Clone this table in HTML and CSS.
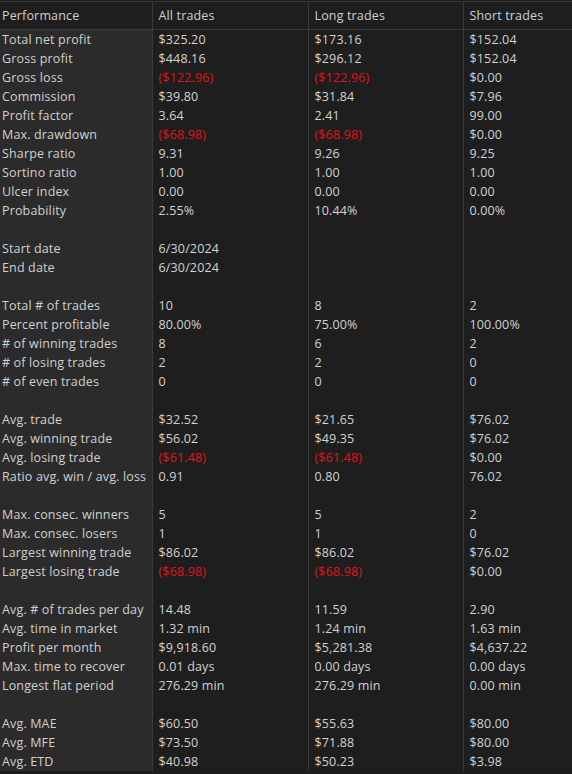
FILE: index.html
```html
<!DOCTYPE html>
<html>
<head>
<meta charset="utf-8">
<link rel="stylesheet" href="styles.css">
</head>
<body>
<table class="perf">
<colgroup><col class="c1"><col class="c2"><col class="c3"><col class="c4"></colgroup>
<thead>
<tr><th>Performance</th><th>All trades</th><th>Long trades</th><th>Short trades</th></tr>
</thead>
<tbody>
<tr><td>Total net profit</td><td>$325.20</td><td>$173.16</td><td>$152.04</td></tr>
<tr><td>Gross profit</td><td>$448.16</td><td>$296.12</td><td>$152.04</td></tr>
<tr><td>Gross loss</td><td class="neg">($122.96)</td><td class="neg">($122.96)</td><td>$0.00</td></tr>
<tr><td>Commission</td><td>$39.80</td><td>$31.84</td><td>$7.96</td></tr>
<tr><td>Profit factor</td><td>3.64</td><td>2.41</td><td>99.00</td></tr>
<tr><td>Max. drawdown</td><td class="neg">($68.98)</td><td class="neg">($68.98)</td><td>$0.00</td></tr>
<tr><td>Sharpe ratio</td><td>9.31</td><td>9.26</td><td>9.25</td></tr>
<tr><td>Sortino ratio</td><td>1.00</td><td>1.00</td><td>1.00</td></tr>
<tr><td>Ulcer index</td><td>0.00</td><td>0.00</td><td>0.00</td></tr>
<tr><td>Probability</td><td>2.55%</td><td>10.44%</td><td>0.00%</td></tr>
<tr><td></td><td></td><td></td><td></td></tr>
<tr><td>Start date</td><td>6/30/2024</td><td></td><td></td></tr>
<tr><td>End date</td><td>6/30/2024</td><td></td><td></td></tr>
<tr><td></td><td></td><td></td><td></td></tr>
<tr><td>Total # of trades</td><td>10</td><td>8</td><td>2</td></tr>
<tr><td>Percent profitable</td><td>80.00%</td><td>75.00%</td><td>100.00%</td></tr>
<tr><td># of winning trades</td><td>8</td><td>6</td><td>2</td></tr>
<tr><td># of losing trades</td><td>2</td><td>2</td><td>0</td></tr>
<tr><td># of even trades</td><td>0</td><td>0</td><td>0</td></tr>
<tr><td></td><td></td><td></td><td></td></tr>
<tr><td>Avg. trade</td><td>$32.52</td><td>$21.65</td><td>$76.02</td></tr>
<tr><td>Avg. winning trade</td><td>$56.02</td><td>$49.35</td><td>$76.02</td></tr>
<tr><td>Avg. losing trade</td><td class="neg">($61.48)</td><td class="neg">($61.48)</td><td>$0.00</td></tr>
<tr><td>Ratio avg. win / avg. loss</td><td>0.91</td><td>0.80</td><td>76.02</td></tr>
<tr><td></td><td></td><td></td><td></td></tr>
<tr><td>Max. consec. winners</td><td>5</td><td>5</td><td>2</td></tr>
<tr><td>Max. consec. losers</td><td>1</td><td>1</td><td>0</td></tr>
<tr><td>Largest winning trade</td><td>$86.02</td><td>$86.02</td><td>$76.02</td></tr>
<tr><td>Largest losing trade</td><td class="neg">($68.98)</td><td class="neg">($68.98)</td><td>$0.00</td></tr>
<tr><td></td><td></td><td></td><td></td></tr>
<tr><td>Avg. # of trades per day</td><td>14.48</td><td>11.59</td><td>2.90</td></tr>
<tr><td>Avg. time in market</td><td>1.32 min</td><td>1.24 min</td><td>1.63 min</td></tr>
<tr><td>Profit per month</td><td>$9,918.60</td><td>$5,281.38</td><td>$4,637.22</td></tr>
<tr><td>Max. time to recover</td><td>0.01 days</td><td>0.00 days</td><td>0.00 days</td></tr>
<tr><td>Longest flat period</td><td>276.29 min</td><td>276.29 min</td><td>0.00 min</td></tr>
<tr><td></td><td></td><td></td><td></td></tr>
<tr><td>Avg. MAE</td><td>$60.50</td><td>$55.63</td><td>$80.00</td></tr>
<tr><td>Avg. MFE</td><td>$73.50</td><td>$71.88</td><td>$80.00</td></tr>
<tr><td>Avg. ETD</td><td>$40.98</td><td>$50.23</td><td>$3.98</td></tr>
</tbody>
</table>
</body>
</html>
```
FILE: styles.css
```css
html, body {
  margin: 0;
  padding: 0;
  background: #1c1c1c;
}
body {
  padding-top: 1px;
  font-family: "Open Sans", "DejaVu Sans", sans-serif;
  font-size: 12.5px;
  letter-spacing: 0.15px;
  color: #d2d2d2;
}
.perf {
  width: 572px;
  border-collapse: collapse;
  table-layout: fixed;
}
.c1 { width: 152px; }
.c2 { width: 156px; }
.c3 { width: 155px; }
.c4 { width: 109px; }
.perf th {
  height: 27px;
  padding: 0 7px 0 6px;
  text-align: left;
  font-weight: normal;
  color: #cfcfcf;
  background: #1e1e1e;
  border-top: 1px solid #3a3a3a;
  border-bottom: 1px solid #3a3a3a;
  border-left: 1px solid #3a3a3a;
  white-space: nowrap;
  overflow: hidden;
}
.perf th:first-child {
  border-left: none;
  padding-left: 2px;
}
.perf td {
  height: 19px;
  padding: 0 7px 0 6px;
  line-height: 19px;
  background: #1e1e1e;
  border-left: 1px solid #3a3a3a;
  white-space: nowrap;
  overflow: hidden;
  text-overflow: clip;
}
.perf td:first-child {
  background: #2b2b2b;
  border-left: none;
  padding-left: 2px;
  padding-right: 8px;
  color: #d0d0d0;
}
.perf td.neg {
  color: #e0141a;
}
```
